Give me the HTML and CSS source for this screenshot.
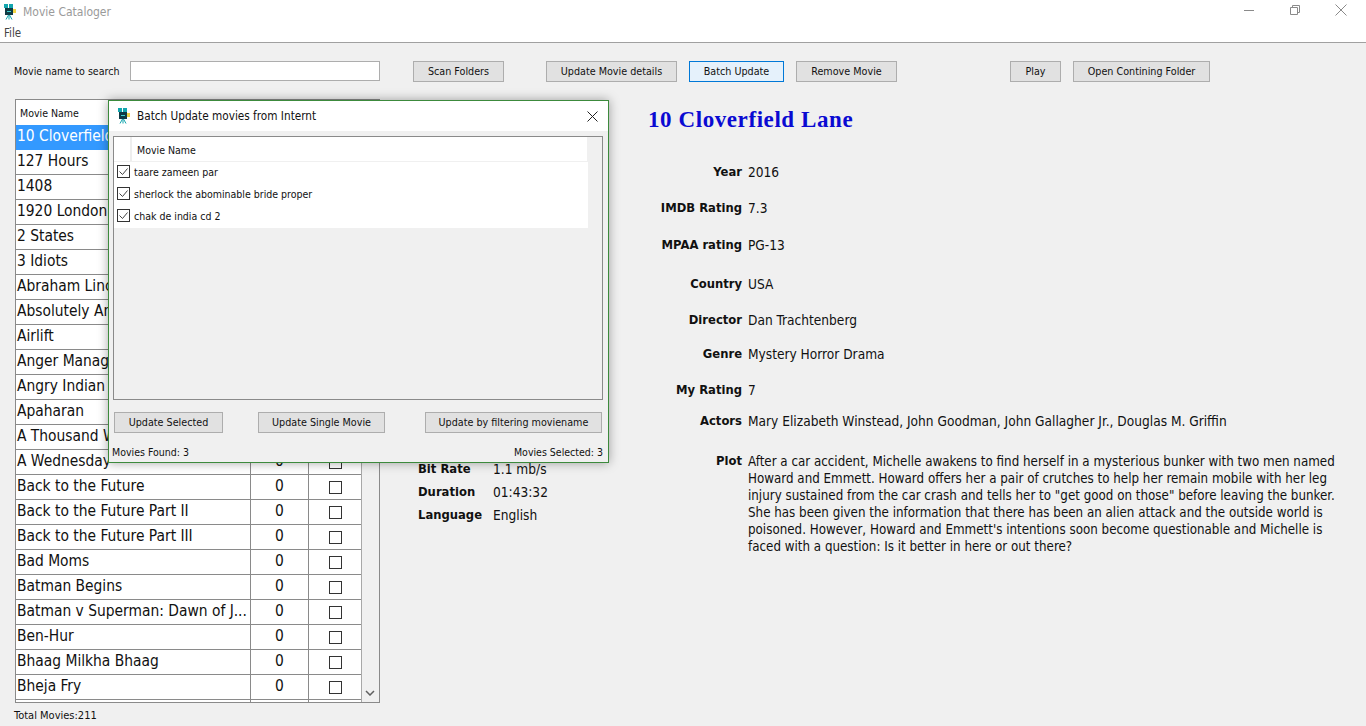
FILE: index.html
```html
<!DOCTYPE html>
<html lang="en">
<head>
<meta charset="utf-8">
<title>Movie Cataloger</title>
<link rel="stylesheet" href="styles.css">
</head>
<body>
<div class="app">
  <header class="titlebar">
    <svg class="appicon" viewBox="0 0 14 16"><rect x="1" y="0" width="4" height="4" fill="#12a5ad"/><rect x="6" y="0" width="4" height="4" fill="#12a5ad"/><rect x="2" y="4" width="8" height="7" fill="#0f3a44"/><rect x="4" y="7" width="4" height="1" fill="#3fd0d0"/><rect x="10" y="5" width="3" height="4" fill="#f2d545"/><path d="M5.500 11 3 15.500M6 11v4.500M6.500 11 9 15.500" stroke="#12a5ad" stroke-width="1" fill="none"/></svg>
    <span class="apptitle">Movie Cataloger</span>
    <div class="winctl">
      <svg width="12" height="12" viewBox="0 0 12 12"><path d="M1 6.500h10" stroke="#8a8a8a"/></svg>
      <svg width="12" height="12" viewBox="0 0 12 12"><path d="M1.500 3.500h7v7h-7zM3.500 3.500v-2h7v7h-2" stroke="#8a8a8a" fill="none"/></svg>
      <svg width="12" height="12" viewBox="0 0 12 12"><path d="M.5.500l11 11M11.500.500l-11 11" stroke="#8a8a8a" fill="none"/></svg>
    </div>
  </header>
  <nav class="menubar">File</nav>

  <section class="toolbar">
    <label class="searchlabel">Movie name to search</label>
    <input class="search" type="text">
    <button class="btn scan">Scan Folders</button>
    <button class="btn details">Update Movie details</button>
    <button class="btn batch">Batch Update</button>
    <button class="btn remove">Remove Movie</button>
    <button class="btn play">Play</button>
    <button class="btn folder">Open Contining Folder</button>
  </section>

  <main class="content">
    <div class="leftcol">
      <div class="listbox">
        <div class="list">
          <div class="listhead">Movie Name</div>
          <div class="row sel"><span class="name">10 Cloverfield Lane</span><span class="rate"></span><span class="chk"></span></div>
          <div class="row"><span class="name">127 Hours</span><span class="rate">0</span><span class="chk"><i class="box"></i></span></div>
          <div class="row"><span class="name">1408</span><span class="rate">0</span><span class="chk"><i class="box"></i></span></div>
          <div class="row"><span class="name">1920 London</span><span class="rate">0</span><span class="chk"><i class="box"></i></span></div>
          <div class="row"><span class="name">2 States</span><span class="rate">0</span><span class="chk"><i class="box"></i></span></div>
          <div class="row"><span class="name">3 Idiots</span><span class="rate">0</span><span class="chk"><i class="box"></i></span></div>
          <div class="row"><span class="name">Abraham Lincoln</span><span class="rate">0</span><span class="chk"><i class="box"></i></span></div>
          <div class="row"><span class="name">Absolutely Anything</span><span class="rate">0</span><span class="chk"><i class="box"></i></span></div>
          <div class="row"><span class="name">Airlift</span><span class="rate">0</span><span class="chk"><i class="box"></i></span></div>
          <div class="row"><span class="name">Anger Management</span><span class="rate">0</span><span class="chk"><i class="box"></i></span></div>
          <div class="row"><span class="name">Angry Indian Goddesses</span><span class="rate">0</span><span class="chk"><i class="box"></i></span></div>
          <div class="row"><span class="name">Apaharan</span><span class="rate">0</span><span class="chk"><i class="box"></i></span></div>
          <div class="row"><span class="name">A Thousand Words</span><span class="rate">0</span><span class="chk"><i class="box"></i></span></div>
          <div class="row"><span class="name">A Wednesday</span><span class="rate">0</span><span class="chk"><i class="box"></i></span></div>
          <div class="row"><span class="name">Back to the Future</span><span class="rate">0</span><span class="chk"><i class="box"></i></span></div>
          <div class="row"><span class="name">Back to the Future Part II</span><span class="rate">0</span><span class="chk"><i class="box"></i></span></div>
          <div class="row"><span class="name">Back to the Future Part III</span><span class="rate">0</span><span class="chk"><i class="box"></i></span></div>
          <div class="row"><span class="name">Bad Moms</span><span class="rate">0</span><span class="chk"><i class="box"></i></span></div>
          <div class="row"><span class="name">Batman Begins</span><span class="rate">0</span><span class="chk"><i class="box"></i></span></div>
          <div class="row"><span class="name">Batman v Superman: Dawn of J...</span><span class="rate">0</span><span class="chk"><i class="box"></i></span></div>
          <div class="row"><span class="name">Ben-Hur</span><span class="rate">0</span><span class="chk"><i class="box"></i></span></div>
          <div class="row"><span class="name">Bhaag Milkha Bhaag</span><span class="rate">0</span><span class="chk"><i class="box"></i></span></div>
          <div class="row"><span class="name">Bheja Fry</span><span class="rate">0</span><span class="chk"><i class="box"></i></span></div>
          <div class="row"><span class="name"></span><span class="rate"></span><span class="chk"></span></div>
        </div>
        <div class="scroll"><svg width="10" height="6" viewBox="0 0 10 6"><path d="M1 1l4 4 4-4" stroke="#606060" stroke-width="1.500" fill="none"/></svg></div>
      </div>
      <div class="total">Total Movies:211</div>
    </div>

    <div class="media">
      <span class="mk">Bit Rate</span><span class="mv">1.1 mb/s</span>
      <span class="mk">Duration</span><span class="mv">01:43:32</span>
      <span class="mk">Language</span><span class="mv">English</span>
    </div>

    <div class="info">
      <h1 class="movietitle">10 Cloverfield Lane</h1>
      <dl class="facts">
        <dt>Year</dt><dd>2016</dd>
        <dt>IMDB Rating</dt><dd>7.3</dd>
        <dt>MPAA rating</dt><dd>PG-13</dd>
        <dt>Country</dt><dd>USA</dd>
        <dt>Director</dt><dd>Dan Trachtenberg</dd>
        <dt>Genre</dt><dd>Mystery Horror Drama</dd>
        <dt>My Rating</dt><dd>7</dd>
        <dt>Actors</dt><dd>Mary Elizabeth Winstead, John Goodman, John Gallagher Jr., Douglas M. Griffin</dd>
        <dt>Plot</dt><dd class="plot">After a car accident, Michelle awakens to find herself in a mysterious bunker with two men named Howard and Emmett. Howard offers her a pair of crutches to help her remain mobile with her leg injury sustained from the car crash and tells her to "get good on those" before leaving the bunker. She has been given the information that there has been an alien attack and the outside world is poisoned. However, Howard and Emmett's intentions soon become questionable and Michelle is faced with a question: Is it better in here or out there?</dd>
      </dl>
    </div>
  </main>

  <aside class="dialog">
    <div class="dlgtitle">
      <svg class="appicon" viewBox="0 0 14 16"><rect x="1" y="0" width="4" height="4" fill="#12a5ad"/><rect x="6" y="0" width="4" height="4" fill="#12a5ad"/><rect x="2" y="4" width="8" height="7" fill="#0f3a44"/><rect x="4" y="7" width="4" height="1" fill="#3fd0d0"/><rect x="10" y="5" width="3" height="4" fill="#f2d545"/><path d="M5.500 11 3 15.500M6 11v4.500M6.500 11 9 15.500" stroke="#12a5ad" stroke-width="1" fill="none"/></svg>
      <span class="dlgname">Batch Update movies from Internt</span>
      <svg class="dlgclose" width="11" height="11" viewBox="0 0 11 11"><path d="M.5.500l10 10M10.500.500l-10 10" stroke="#222" fill="none"/></svg>
    </div>
    <div class="dlgbody">
      <div class="dlglist">
        <div class="dlghead"><span class="corner"></span><span class="dlgcol">Movie Name</span></div>
        <div class="dlgrows">
          <div class="dlgrow"><svg class="tick" viewBox="0 0 13 13"><rect x=".5" y=".5" width="12" height="12" fill="#fff" stroke="#333"/><path d="M2.500 6.500l3 3 5-6" stroke="#444" fill="none"/></svg>taare zameen par</div>
          <div class="dlgrow"><svg class="tick" viewBox="0 0 13 13"><rect x=".5" y=".5" width="12" height="12" fill="#fff" stroke="#333"/><path d="M2.500 6.500l3 3 5-6" stroke="#444" fill="none"/></svg>sherlock the abominable bride proper</div>
          <div class="dlgrow"><svg class="tick" viewBox="0 0 13 13"><rect x=".5" y=".5" width="12" height="12" fill="#fff" stroke="#333"/><path d="M2.500 6.500l3 3 5-6" stroke="#444" fill="none"/></svg>chak de india cd 2</div>
        </div>
      </div>
      <div class="dlgbtns">
        <button class="btn dsel">Update Selected</button>
        <button class="btn dsingle">Update Single Movie</button>
        <button class="btn dfilter">Update by filtering moviename</button>
      </div>
      <div class="dlgfoot"><span>Movies Found: 3</span><span>Movies Selected: 3</span></div>
    </div>
  </aside>
</div>
</body>
</html>
```
FILE: styles.css
```css
* { box-sizing: border-box; }
html, body { margin: 0; padding: 0; }
body { width: 1366px; height: 726px; overflow: hidden; background: #f0f0f0; font-family: "DejaVu Sans Condensed", "DejaVu Sans", sans-serif; font-stretch: condensed; color: #111; }
.app { position: relative; width: 1366px; height: 726px; }

.titlebar { height: 22px; background: #fff; display: flex; align-items: center; padding: 1px 0 0 3px; }
.appicon { width: 14px; height: 16px; flex: none; }
.apptitle { margin-left: 6px; font-size: 12px; color: #9a9a9a; }
.winctl { margin-left: auto; display: flex; gap: 34px; padding-right: 19px; margin-top: -4px; }
.menubar { height: 21px; background: #fff; border-bottom: 1px solid #a0a0a0; font-size: 11.500px; line-height: 22px; padding-left: 4px; color: #444; }

.toolbar { height: 56px; display: flex; align-items: flex-start; padding: 18px 0 0 14px; }
.searchlabel { font-size: 10.600px; line-height: 20px; width: 116px; flex: none; }
.search { width: 250px; height: 20px; border: 1px solid #adadad; background: #fff; flex: none; padding: 0; }
.btn { height: 21px; border: 1px solid #adadad; background: #e1e1e1; font-family: inherit; font-stretch: condensed; font-size: 10.700px; color: #111; padding: 0 0 1px; flex: none; }
.scan { width: 91px; margin-left: 33px; }
.details { width: 131px; margin-left: 42px; }
.batch { width: 95px; margin-left: 12px; background: #e5f1fb; border-color: #0078d7; }
.remove { width: 101px; margin-left: 12px; }
.play { width: 51px; margin-left: 113px; }
.folder { width: 137px; margin-left: 12px; }

.content { display: flex; align-items: flex-start; padding-left: 15px; }
.leftcol { width: 365px; flex: none; }
.listbox { height: 604px; border: 1px solid #8a8a8a; display: flex; background: #f0f0f0; overflow: hidden; }
.list { width: 346px; flex: none; background: #fff; border-right: 1px solid #a8a8a8; overflow: hidden; }
.listhead { height: 25px; font-size: 10.500px; line-height: 26px; padding-left: 4px; background: #fff; }
.row { height: 25px; display: grid; grid-template-columns: 235px 58px 53px; border-bottom: 1px solid #8a8a8a; font-size: 15.400px; line-height: 22px; }
.name { padding-left: 1px; border-right: 1px solid #8a8a8a; white-space: nowrap; overflow: hidden; }
.rate { text-align: center; border-right: 1px solid #8a8a8a; }
.chk { display: flex; align-items: center; justify-content: center; }
.box { width: 13px; height: 13px; border: 1px solid #333; background: #fff; display: block; }
.sel { background: #3399ff; color: #fff; border-bottom: 0; }
.sel .name { color: #fff; border-right: 0; }
.scroll { flex: 1; display: flex; align-items: flex-end; justify-content: center; padding: 0 1px 6px 0; }
.total { font-size: 11px; line-height: 16px; margin: 5px 0 0 -1px; }

.media { width: 222px; margin-left: 38px; flex: none; display: grid; grid-template-columns: 75px 1fr; grid-auto-rows: 23px; padding-top: 358px; align-items: center; font-size: 13.600px; }
.mk { font-family: "DejaVu Sans", sans-serif; font-stretch: normal; font-weight: 700; font-size: 11.600px; }
.info { flex: 1; padding-left: 8px; }
.movietitle { margin: 0; font: 700 23px/30px "Liberation Serif", serif; color: #0a0ad2; letter-spacing: .58px; padding-top: 6px; height: 65px; }
.facts { margin: 0; display: grid; grid-template-columns: 94px 1fr; column-gap: 6px; grid-template-rows: 36px 37px 39px 36px 34px 36px 31px 40px auto; width: 710px; }
.facts dt { font-family: "DejaVu Sans", sans-serif; font-stretch: normal; font-weight: 700; font-size: 11.600px; text-align: right; line-height: 17px; }
.facts dd { margin: 0; font-size: 13.600px; line-height: 17px; }
.facts .plot { font-size: 13.250px; }

.dialog { position: absolute; left: 108px; top: 100px; width: 501px; height: 363px; border: 1px solid #3c8a3c; background: #f0f0f0; box-shadow: 0 0 10px rgba(0,0,0,.35); display: flex; flex-direction: column; }
.dlgtitle { height: 30px; background: #fff; display: flex; align-items: center; padding: 0 10px 0 8px; flex: none; }
.dlgname { margin-left: 6px; font-size: 11.700px; color: #111; }
.dlgclose { margin-left: auto; }
.dlgbody { flex: 1; display: flex; flex-direction: column; padding: 5px 5px 0 4px; }
.dlglist { height: 264px; border: 1px solid #8a8a8a; flex: none; }
.dlghead { height: 25px; display: flex; width: 473px; background: #fff; border-bottom: 1px solid #f0f0f0; }
.corner { width: 18px; border-right: 2px solid #eee; }
.dlgcol { padding-left: 5px; font-size: 10.500px; line-height: 27px; }
.dlgrows { width: 474px; background: #fff; }
.dlgrow { height: 22px; display: flex; align-items: center; gap: 4px; padding: 0 0 3px 3px; font-size: 10.500px; }
.tick { width: 13px; height: 13px; flex: none; }
.dlgbtns { display: flex; gap: 35px; margin-top: 12px; padding-left: 1px; }
.dsel { width: 109px; }
.dsingle { width: 127px; }
.dfilter { width: 177px; margin-left: 5px; }
.dlgfoot { display: flex; justify-content: space-between; font-size: 10.500px; line-height: 14px; margin: 12px 0 0 -1px; }
```
